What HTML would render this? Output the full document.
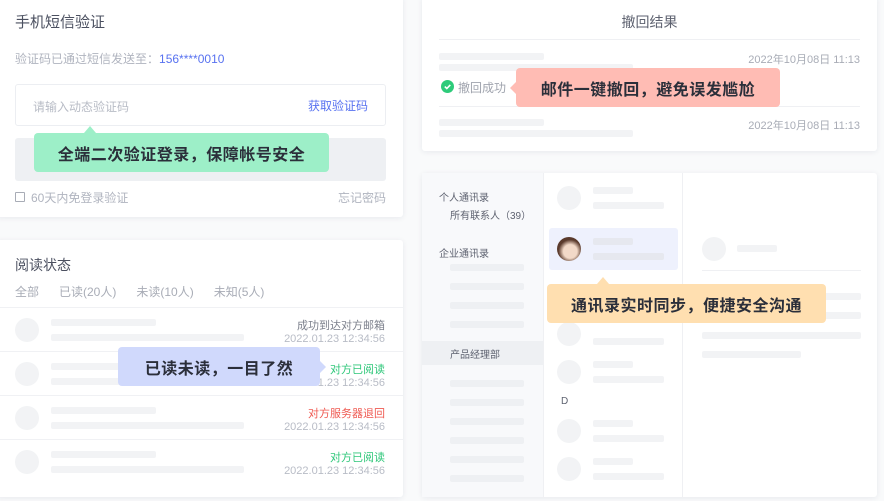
<!DOCTYPE html>
<html><head><meta charset="utf-8"><style>
*{margin:0;padding:0;box-sizing:border-box}
body{width:884px;height:501px;overflow:hidden;background:#f9fafb;font-family:"Liberation Sans","Noto Sans CJK SC",sans-serif;position:relative}
.a{position:absolute}
.card{position:absolute;background:#fff;box-shadow:0 1px 6px rgba(30,40,80,.08);border-radius:3px}
.t{position:absolute;white-space:nowrap}
.bar{position:absolute;background:#f2f3f5;border-radius:2px}
.c{position:absolute;border-radius:50%;background:#f2f3f5}
.tip{position:absolute;border-radius:4px;font-size:16px;font-weight:bold;color:#2b2f3a;display:flex;align-items:center;justify-content:center;letter-spacing:.5px}
</style></head><body>

<div class="card" style="left:-4px;top:-4px;width:407px;height:221px"></div>
<div class="t" style="left:15px;top:11px;font-size:15px;color:#4b5060">手机短信验证</div>
<div class="t" style="left:15px;top:50px;font-size:12px;color:#b0b4bf">验证码已通过短信发送至：<span style="color:#5872f0">156****0010</span></div>
<div class="a" style="left:15px;top:84px;width:371px;height:42px;border:1px solid #eceef2;border-radius:3px"></div>
<div class="t" style="left:33px;top:98px;font-size:12px;color:#b8bcc6">请输入动态验证码</div>
<div class="t" style="left:308px;top:97px;font-size:12px;color:#5872f0">获取验证码</div>
<div class="a" style="left:15px;top:138px;width:371px;height:43px;background:#eef0f3;border-radius:3px"></div>
<div class="a" style="left:15px;top:192px;width:10px;height:10px;border:1px solid #a8acb6;border-radius:1px"></div>
<div class="t" style="left:31px;top:189px;font-size:12px;color:#b0b4bf">60天内免登录验证</div>
<div class="t" style="left:338px;top:189px;font-size:12px;color:#b0b4bf">忘记密码</div>
<div class="tip" style="left:34px;top:133px;width:295px;height:39px;background:#9defc8">全端二次验证登录，保障帐号安全</div>
<div class="a" style="left:84px;top:126px;width:0;height:0;border-left:6px solid transparent;border-right:6px solid transparent;border-bottom:7px solid #9defc8"></div>

<div class="card" style="left:-4px;top:240px;width:407px;height:257px"></div>
<div class="t" style="left:15px;top:255px;font-size:14px;color:#4b5060">阅读状态</div>
<div class="t" style="left:15px;top:283px;font-size:12px;color:#a8acb6;word-spacing:0">全部<span style="margin-left:20px">已读(20人)</span><span style="margin-left:20px">未读(10人)</span><span style="margin-left:20px">未知(5人)</span></div>
<div class="a" style="left:0;top:307px;width:403px;height:1px;background:#f0f1f4"></div>
<div class="a" style="left:0;top:351px;width:403px;height:1px;background:#f0f1f4"></div>
<div class="a" style="left:0;top:395px;width:403px;height:1px;background:#f0f1f4"></div>
<div class="a" style="left:0;top:439px;width:403px;height:1px;background:#f0f1f4"></div>

<div class="c" style="left:15px;top:318px;width:24px;height:24px"></div>
<div class="bar" style="left:51px;top:319px;width:105px;height:7px"></div>
<div class="bar" style="left:51px;top:334px;width:193px;height:7px"></div>
<div class="t" style="right:499px;top:317px;font-size:11px;color:#7c808c">成功到达对方邮箱</div>
<div class="t" style="right:499px;top:333px;font-size:11px;color:#b8bcc6">2022.01.23 12:34:56</div>

<div class="c" style="left:15px;top:362px;width:24px;height:24px"></div>
<div class="bar" style="left:51px;top:363px;width:105px;height:7px"></div>
<div class="bar" style="left:51px;top:378px;width:193px;height:7px"></div>
<div class="t" style="right:499px;top:361px;font-size:11px;color:#2fc77a">对方已阅读</div>
<div class="t" style="right:499px;top:377px;font-size:11px;color:#b8bcc6">2022.01.23 12:34:56</div>

<div class="c" style="left:15px;top:406px;width:24px;height:24px"></div>
<div class="bar" style="left:51px;top:407px;width:105px;height:7px"></div>
<div class="bar" style="left:51px;top:422px;width:193px;height:7px"></div>
<div class="t" style="right:499px;top:405px;font-size:11px;color:#ef5a52">对方服务器退回</div>
<div class="t" style="right:499px;top:421px;font-size:11px;color:#b8bcc6">2022.01.23 12:34:56</div>

<div class="c" style="left:15px;top:450px;width:24px;height:24px"></div>
<div class="bar" style="left:51px;top:451px;width:105px;height:7px"></div>
<div class="bar" style="left:51px;top:466px;width:193px;height:7px"></div>
<div class="t" style="right:499px;top:449px;font-size:11px;color:#2fc77a">对方已阅读</div>
<div class="t" style="right:499px;top:465px;font-size:11px;color:#b8bcc6">2022.01.23 12:34:56</div>

<div class="tip" style="left:118px;top:347px;width:202px;height:39px;background:#d0d9fc">已读未读，一目了然</div>
<div class="a" style="left:320px;top:361px;width:0;height:0;border-top:6px solid transparent;border-bottom:6px solid transparent;border-left:6px solid #d0d9fc"></div>

<div class="card" style="left:422px;top:-4px;width:455px;height:155px"></div>
<div class="t" style="left:0;width:1299px;text-align:center;top:12px;font-size:14px;color:#5e6270">撤回结果</div>
<div class="a" style="left:439px;top:39px;width:421px;height:1px;background:#eff0f3"></div>
<div class="bar" style="left:439px;top:53px;width:105px;height:7px"></div>
<div class="bar" style="left:439px;top:64px;width:194px;height:7px"></div>
<div class="t" style="right:24px;top:51px;font-size:11px;color:#a8acb6">2022年10月08日 11:13</div>
<div class="a" style="left:441px;top:80px;width:13px;height:13px;border-radius:50%;background:#2dcb7a"></div>
<svg class="a" style="left:441px;top:80px" width="13" height="13" viewBox="0 0 13 13"><path d="M3.8 6.6l2 1.9 3.5-3.6" stroke="#fff" stroke-width="1.6" fill="none"/></svg>
<div class="t" style="left:458px;top:79px;font-size:12px;color:#a0a4ae">撤回成功</div>
<div class="a" style="left:439px;top:106px;width:421px;height:1px;background:#eff0f3"></div>
<div class="bar" style="left:439px;top:119px;width:105px;height:7px"></div>
<div class="bar" style="left:439px;top:130px;width:194px;height:7px"></div>
<div class="t" style="right:24px;top:117px;font-size:11px;color:#a8acb6">2022年10月08日 11:13</div>
<div class="tip" style="left:516px;top:68px;width:264px;height:39px;background:#ffbcb4">邮件一键撤回，避免误发尴尬</div>
<div class="a" style="left:510px;top:82px;width:0;height:0;border-top:6px solid transparent;border-bottom:6px solid transparent;border-right:6px solid #ffbcb4"></div>

<div class="card" style="left:422px;top:173px;width:455px;height:324px"></div>
<div class="a" style="left:422px;top:173px;width:121px;height:324px;background:#f8f9fb"></div>
<div class="a" style="left:543px;top:173px;width:1px;height:324px;background:#eff0f3"></div>
<div class="a" style="left:682px;top:173px;width:1px;height:324px;background:#eff0f3"></div>
<div class="t" style="left:439px;top:189px;font-size:10px;color:#5e6270">个人通讯录</div>
<div class="t" style="left:450px;top:207px;font-size:10px;color:#5e6270">所有联系人（39）</div>
<div class="t" style="left:439px;top:245px;font-size:10px;color:#5e6270">企业通讯录</div>
<div class="bar" style="left:450px;top:264px;width:74px;height:7px;background:#eef0f3"></div>
<div class="bar" style="left:450px;top:283px;width:74px;height:7px;background:#eef0f3"></div>
<div class="bar" style="left:450px;top:302px;width:74px;height:7px;background:#eef0f3"></div>
<div class="bar" style="left:450px;top:321px;width:74px;height:7px;background:#eef0f3"></div>
<div class="a" style="left:422px;top:341px;width:121px;height:24px;background:#eef0f3"></div>
<div class="t" style="left:450px;top:346px;font-size:10px;color:#5e6270">产品经理部</div>
<div class="bar" style="left:450px;top:380px;width:74px;height:7px;background:#eef0f3"></div>
<div class="bar" style="left:450px;top:399px;width:74px;height:7px;background:#eef0f3"></div>
<div class="bar" style="left:450px;top:418px;width:74px;height:7px;background:#eef0f3"></div>
<div class="bar" style="left:450px;top:437px;width:74px;height:7px;background:#eef0f3"></div>
<div class="bar" style="left:450px;top:456px;width:74px;height:7px;background:#eef0f3"></div>
<div class="bar" style="left:450px;top:475px;width:74px;height:7px;background:#eef0f3"></div>

<div class="c" style="left:557px;top:186px;width:24px;height:24px"></div>
<div class="bar" style="left:593px;top:187px;width:40px;height:7px"></div>
<div class="bar" style="left:593px;top:202px;width:71px;height:7px"></div>
<div class="a" style="left:549px;top:228px;width:129px;height:42px;background:#eef1fd;border-radius:3px"></div>
<div class="a" style="left:557px;top:237px;width:24px;height:24px;border-radius:50%;background:radial-gradient(circle at 55% 60%,#f2d9c8 35%,#5a3a2c 60%)"></div>
<div class="bar" style="left:593px;top:238px;width:40px;height:7px;background:#e6e8ef"></div>
<div class="bar" style="left:593px;top:253px;width:71px;height:7px;background:#e6e8ef"></div>
<div class="c" style="left:557px;top:322px;width:24px;height:24px"></div>
<div class="bar" style="left:593px;top:338px;width:71px;height:7px"></div>
<div class="c" style="left:557px;top:360px;width:24px;height:24px"></div>
<div class="bar" style="left:593px;top:361px;width:40px;height:7px"></div>
<div class="bar" style="left:593px;top:376px;width:71px;height:7px"></div>
<div class="t" style="left:561px;top:396px;font-size:10px;color:#5e6270">D</div>
<div class="c" style="left:557px;top:419px;width:24px;height:24px"></div>
<div class="bar" style="left:593px;top:420px;width:40px;height:7px"></div>
<div class="bar" style="left:593px;top:435px;width:71px;height:7px"></div>
<div class="c" style="left:557px;top:457px;width:24px;height:24px"></div>
<div class="bar" style="left:593px;top:458px;width:40px;height:7px"></div>
<div class="bar" style="left:593px;top:473px;width:71px;height:7px"></div>

<div class="c" style="left:702px;top:237px;width:24px;height:24px"></div>
<div class="bar" style="left:737px;top:245px;width:40px;height:7px"></div>
<div class="a" style="left:702px;top:270px;width:159px;height:1px;background:#eff0f3"></div>
<div class="bar" style="left:702px;top:293px;width:159px;height:7px"></div>
<div class="bar" style="left:702px;top:312px;width:159px;height:7px"></div>
<div class="bar" style="left:702px;top:332px;width:159px;height:7px"></div>
<div class="bar" style="left:702px;top:351px;width:99px;height:7px"></div>

<div class="tip" style="left:547px;top:284px;width:279px;height:39px;background:#ffdfb0">通讯录实时同步，便捷安全沟通</div>
<div class="a" style="left:597px;top:277px;width:0;height:0;border-left:6px solid transparent;border-right:6px solid transparent;border-bottom:7px solid #ffdfb0"></div>
</body></html>
